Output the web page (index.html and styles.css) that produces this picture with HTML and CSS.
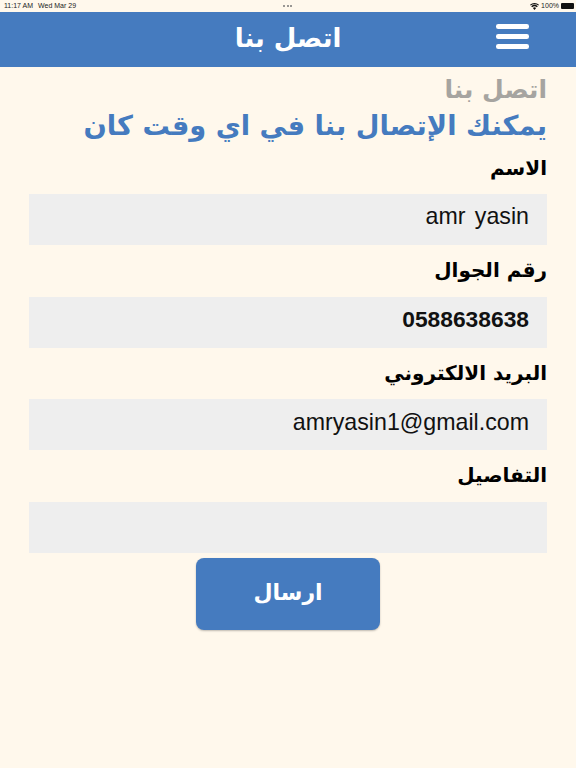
FILE: index.html
```html
<!DOCTYPE html>
<html lang="ar" dir="rtl">
<head>
<meta charset="utf-8">
<title>اتصل بنا</title>
<link rel="stylesheet" href="styles.css">
</head>
<body>
<div class="status" dir="ltr">
  <div class="status-left"><span>11:17 AM</span><span>Wed Mar 29</span></div>
  <div class="dots"><i></i><i></i><i></i></div>
  <div class="status-right">
    <svg class="wifi" viewBox="0 0 12 9" width="9" height="7"><path d="M6 9 3.9 6.6a3 3 0 0 1 4.2 0zM2.9 5.5 1.6 4a6.4 6.4 0 0 1 8.8 0L9.1 5.5a4.5 4.5 0 0 0-6.2 0zM.9 3.2 0 2.2a8.8 8.8 0 0 1 12 0l-.9 1a7.5 7.5 0 0 0-10.2 0z" fill="#111"/></svg>
    <span>100%</span>
    <span class="battery"></span>
  </div>
</div>
<header class="bar">
  <h1>اتصل بنا</h1>
  <div class="menu"><i></i><i></i><i></i></div>
</header>
<main class="content">
  <div class="sub">اتصل بنا</div>
  <div class="lead">يمكنك الإتصال بنا في اي وقت كان</div>
  <form class="form">
    <label>الاسم</label>
    <div class="field"><span class="value name">amr yasin</span></div>
    <label>رقم الجوال</label>
    <div class="field strong"><span class="value">0588638638</span></div>
    <label>البريد الالكتروني</label>
    <div class="field"><span class="value">amryasin1@gmail.com</span></div>
    <label>التفاصيل</label>
    <div class="field"></div>
    <div class="send">ارسال</div>
  </form>
</main>
</body>
</html>
```
FILE: styles.css
```css
* { box-sizing: border-box; }
html, body { margin: 0; padding: 0; }
body {
  width: 576px;
  height: 768px;
  overflow: hidden;
  background: #fff8ec;
  font-family: "DejaVu Sans", sans-serif;
  color: #000;
}
.status {
  height: 12px;
  padding: 0 2px 0 4px;
  display: flex;
  align-items: center;
  justify-content: space-between;
  font: 7px/12px "Liberation Sans", sans-serif;
  color: #222;
  position: relative;
}
.status-left { display: flex; gap: 5px; }
.dots { display: flex; gap: 1.5px; position: absolute; left: 283px; top: 5px; }
.dots i { width: 2px; height: 2px; border-radius: 50%; background: #777; }
.status-right { display: flex; align-items: center; gap: 2px; }
.battery { width: 13px; height: 6px; border-radius: 1px; background: #111; }
.bar {
  height: 55px;
  background: #457bbf;
  position: relative;
  display: flex;
  align-items: center;
  justify-content: center;
}
.bar h1 {
  margin: 0;
  color: #fff;
  font: bold 26px/1 "DejaVu Sans", sans-serif;
  padding-bottom: 4px;
}
.menu {
  position: absolute;
  left: 496px;
  top: 12px;
  width: 33px;
  display: flex;
  flex-direction: column;
  gap: 5.5px;
}
.menu i { height: 4.5px; border-radius: 2.25px; background: #fff; }
.content { padding: 8px 29px 0; }
.sub {
  color: #a6a4a0;
  font: bold 25px/30px "DejaVu Sans", sans-serif;
}
.lead {
  color: #457bbf;
  padding-top: 2px;
  font: bold 27.3px/38px "DejaVu Sans", sans-serif;
  white-space: nowrap;
}
.form { display: flex; flex-direction: column; }
label {
  height: 51.6px;
  padding-top: 14px;
  font: bold 20px/23px "DejaVu Sans", sans-serif;
}
.form > label:first-child { height: 49px; padding-top: 12px; }
.field {
  height: 51px;
  padding: 0 18px 5px;
  background: #eeeeee;
  display: flex;
  align-items: center;
  justify-content: flex-start;
  font: 23.2px/1 "Liberation Sans", sans-serif;
  color: #111;
}
.value { direction: ltr; }
.name { word-spacing: 3px; }
.strong { font-weight: bold; font-size: 22.8px; }
.send {
  align-self: center;
  width: 184px;
  height: 72px;
  margin-top: 5px;
  background: #457bbf;
  border-radius: 8px;
  box-shadow: 0 1px 2px rgba(0,0,0,.25);
  color: #fff;
  font: bold 22px/70px "DejaVu Sans", sans-serif;
  text-align: center;
}
```
